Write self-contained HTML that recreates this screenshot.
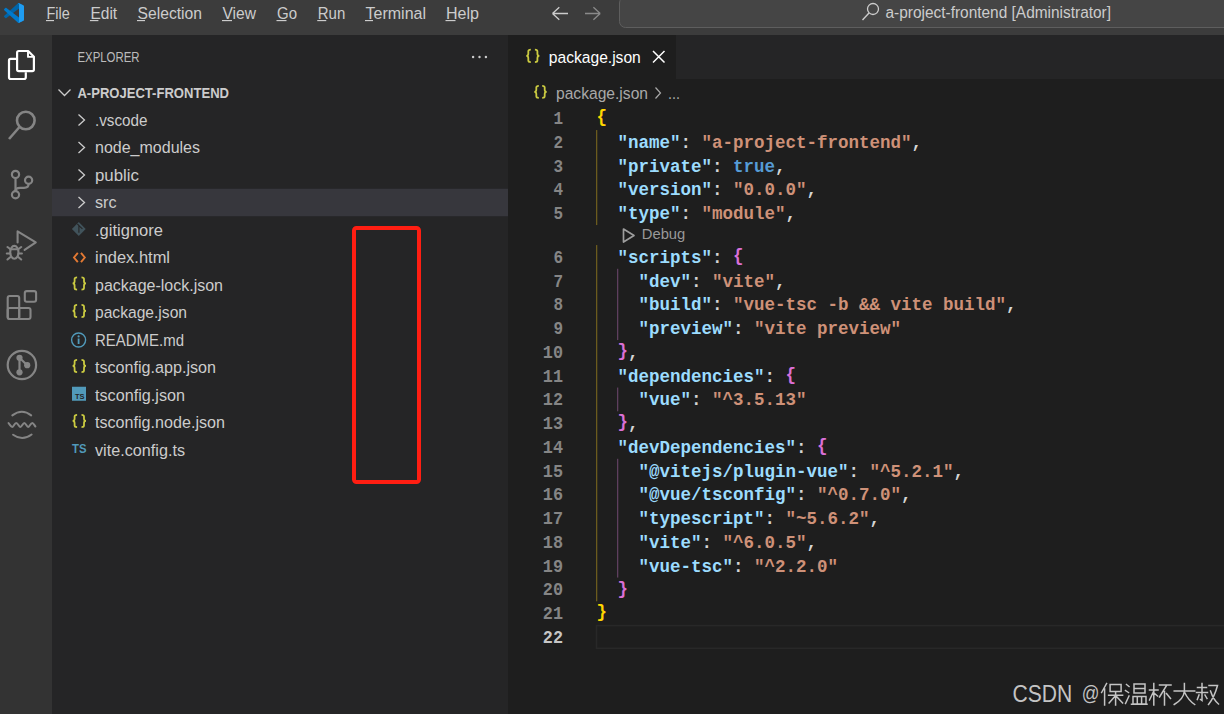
<!DOCTYPE html><html><head><meta charset="utf-8"><style>*{margin:0;padding:0}html,body{width:1224px;height:714px;overflow:hidden;background:#1e1e1e}svg{display:block}text{white-space:pre}</style></head><body>
<svg width="1224" height="714" viewBox="0 0 1224 714">
<rect x="0" y="0" width="1224" height="714" fill="#1e1e1e"/>
<rect x="0" y="0" width="1224" height="35" fill="#3c3c3c"/>
<rect x="0" y="35" width="52" height="679" fill="#333333"/>
<rect x="52" y="35" width="456" height="679" fill="#252526"/>
<rect x="508" y="35" width="716" height="44" fill="#252526"/>
<rect x="508" y="35" width="168" height="44" fill="#1e1e1e"/>
<g transform="translate(4,3) scale(0.2)"><path d="M96.4614 10.7962L75.8569 0.875542C73.4719 -0.272773 70.6217 0.211611 68.75 2.08333L1.29858 63.5832C-0.515693 65.2373 -0.513607 68.0937 1.30308 69.7452L6.81272 74.754C8.29793 76.1042 10.5347 76.2036 12.1338 74.9905L93.3609 13.3699C96.0859 11.3026 100 13.2462 100 16.6667V16.4275C100 14.0265 98.6246 11.8378 96.4614 10.7962Z" fill="#0065A9"/><path d="M96.4614 89.2038L75.8569 99.1245C73.4719 100.273 70.6217 99.7884 68.75 97.9167L1.29858 36.4169C-0.515693 34.7627 -0.513607 31.9063 1.30308 30.2548L6.81272 25.246C8.29793 23.8958 10.5347 23.7964 12.1338 25.0095L93.3609 86.6301C96.0859 88.6974 100 86.7538 100 83.3334V83.5726C100 85.9735 98.6246 88.1622 96.4614 89.2038Z" fill="#007ACC"/><path d="M75.8578 99.1263C73.4721 100.274 70.6219 99.7885 68.75 97.9166C71.0564 100.223 75 98.5895 75 95.3278V4.67213C75 1.41039 71.0564 -0.223106 68.75 2.08329C70.6219 0.211402 73.4721 -0.273666 75.8578 0.873633L96.4587 10.7807C98.6234 11.8217 100 14.0112 100 16.4132V83.5871C100 85.9893 98.6234 88.1788 96.4586 89.2198L75.8578 99.1263Z" fill="#1F9CF0"/></g>
<text x="46.5" y="19" font-family="Liberation Sans" font-size="16.25" fill="#cccccc" font-weight="normal" textLength="23.3" lengthAdjust="spacingAndGlyphs" >File</text>
<text x="90.4" y="19" font-family="Liberation Sans" font-size="16.25" fill="#cccccc" font-weight="normal" textLength="26.8" lengthAdjust="spacingAndGlyphs" >Edit</text>
<text x="137.5" y="19" font-family="Liberation Sans" font-size="16.25" fill="#cccccc" font-weight="normal" textLength="64.5" lengthAdjust="spacingAndGlyphs" >Selection</text>
<text x="222.5" y="19" font-family="Liberation Sans" font-size="16.25" fill="#cccccc" font-weight="normal" textLength="33.5" lengthAdjust="spacingAndGlyphs" >View</text>
<text x="277" y="19" font-family="Liberation Sans" font-size="16.25" fill="#cccccc" font-weight="normal" textLength="20" lengthAdjust="spacingAndGlyphs" >Go</text>
<text x="317.75" y="19" font-family="Liberation Sans" font-size="16.25" fill="#cccccc" font-weight="normal" textLength="27.5" lengthAdjust="spacingAndGlyphs" >Run</text>
<text x="365.5" y="19" font-family="Liberation Sans" font-size="16.25" fill="#cccccc" font-weight="normal" textLength="60.5" lengthAdjust="spacingAndGlyphs" >Terminal</text>
<text x="446" y="19" font-family="Liberation Sans" font-size="16.25" fill="#cccccc" font-weight="normal" textLength="33" lengthAdjust="spacingAndGlyphs" >Help</text>
<rect x="46.0" y="20" width="8" height="1.15" fill="#cccccc"/>
<rect x="89.9" y="20" width="8.5" height="1.15" fill="#cccccc"/>
<rect x="137.0" y="20" width="8" height="1.15" fill="#cccccc"/>
<rect x="222.0" y="20" width="10" height="1.15" fill="#cccccc"/>
<rect x="276.5" y="20" width="10" height="1.15" fill="#cccccc"/>
<rect x="317.25" y="20" width="9" height="1.15" fill="#cccccc"/>
<rect x="365.0" y="20" width="8" height="1.15" fill="#cccccc"/>
<rect x="445.5" y="20" width="10" height="1.15" fill="#cccccc"/>
<path d="M552.5 13.5 H568 M552.5 13.5 L559.3 7.2 M552.5 13.5 L559.3 19.8" stroke="#cccccc" stroke-width="1.3" fill="none"/>
<path d="M600.2 13.5 H585 M600.2 13.5 L593.4 7.2 M600.2 13.5 L593.4 19.8" stroke="#8a8a8a" stroke-width="1.3" fill="none"/>
<rect x="619.5" y="-3" width="640" height="30.5" rx="6" fill="#454545" stroke="#5e5e5e" stroke-width="1"/>
<circle cx="873" cy="9" r="5.5" stroke="#cccccc" stroke-width="1.3" fill="none"/><path d="M869 13 L862.5 20" stroke="#cccccc" stroke-width="1.4"/>
<text x="885.5" y="18.4" font-family="Liberation Sans" font-size="16" fill="#cccccc" font-weight="normal" textLength="225.5" lengthAdjust="spacingAndGlyphs" >a-project-frontend [Administrator]</text>
<g stroke="#ffffff" stroke-width="2.2" fill="none" stroke-linejoin="round"><path d="M16.4 58.8 H10.7 Q9 58.8 9 60.5 V77.3 Q9 79 10.7 79 H24.1 Q25.8 79 25.8 77.3 V72.3"/><path d="M18.8 51 H28.2 L33.9 56.7 V69.5 Q33.9 71.2 32.2 71.2 H18.8 Q17.1 71.2 17.1 69.5 V52.7 Q17.1 51 18.8 51 Z"/><path d="M28 51.5 V56.9 H33.4" stroke-width="1.9"/></g>
<g stroke="#858585" stroke-width="2.6" fill="none"><circle cx="25.8" cy="120.5" r="8.8"/><path d="M19.5 127 L9 139"/></g>
<g stroke="#858585" stroke-width="2.2" fill="none"><circle cx="15.5" cy="174.4" r="3.6"/><circle cx="15.5" cy="194.8" r="3.6"/><circle cx="28.6" cy="180.3" r="3.6"/><path d="M15.5 178 V191.2"/><path d="M28.6 184 Q28.6 187.8 24 187.8 H20 Q15.5 187.8 15.5 191"/></g>
<g stroke="#858585" stroke-width="2.1" fill="none" stroke-linejoin="round" stroke-linecap="round"><path d="M17.6 242.5 V231.3 L35.8 242.3 L24.6 249.8"/><ellipse cx="14.35" cy="252.3" rx="4.1" ry="6.4"/><path d="M10.5 249.2 H18.2"/><path d="M7.5 247 L10.2 249 M6.8 253.5 H10.2 M7.5 259.5 L10.2 257.2 M21.2 247 L18.5 249 M21.9 253.5 H18.5 M21.2 259.5 L18.5 257.2"/></g>
<g stroke="#858585" stroke-width="2.1" fill="none"><rect x="7.7" y="296" width="11.5" height="23" rx="2"/><rect x="7.7" y="308" width="22.8" height="11" rx="2"/><path d="M19.2 308 V319"/><rect x="24.8" y="291.1" width="11.3" height="10.6" rx="2"/></g>
<g stroke="#858585" stroke-width="2.2" fill="none"><circle cx="21.9" cy="365" r="14.2"/><path d="M19.5 357.8 V372.3 M19.5 357.8 L27.2 365.2"/></g>
<g fill="#858585"><circle cx="19.5" cy="357.8" r="3.1"/><circle cx="19.5" cy="372.3" r="3.1"/><circle cx="27.2" cy="365.2" r="3.1"/></g>
<g stroke="#858585" stroke-width="2" fill="none" stroke-linecap="round"><path d="M12.3 415.4 Q22 408 31.2 415.4"/><path d="M13.1 434.7 Q22.3 441.5 31.6 434.5"/><path d="M8.5 423 C10 425 11 427 12.2 427 C13.5 427 14.5 423 16.2 423 C18 423 19 427 20.4 427 C21.8 427 22.8 423 24.3 423 C25.8 423 26.8 427 28.1 427 C29.5 427 30.5 423 32.4 423 C33.5 423 34.5 425.5 35.4 426.5"/></g>
<text x="77.4" y="62" font-family="Liberation Sans" font-size="13.75" fill="#bbbbbb" font-weight="normal" textLength="62.2" lengthAdjust="spacingAndGlyphs" >EXPLORER</text>
<circle cx="473.1" cy="57" r="1.2" fill="#cccccc"/>
<circle cx="479.5" cy="57" r="1.2" fill="#cccccc"/>
<circle cx="485.9" cy="57" r="1.2" fill="#cccccc"/>
<path d="M58.5 89.5 L64.5 95.5 L70.5 89.5" stroke="#cccccc" stroke-width="1.3" fill="none"/>
<text x="77.4" y="98" font-family="Liberation Sans" font-size="13.75" fill="#cccccc" font-weight="bold" textLength="151.6" lengthAdjust="spacingAndGlyphs" >A-PROJECT-FRONTEND</text>
<rect x="52" y="188.75" width="456" height="27.5" fill="#37373d"/>
<path d="M78.5 114.5 L84.5 120.0 L78.5 125.5" stroke="#cccccc" stroke-width="1.3" fill="none"/>
<text x="95" y="125.85" font-family="Liberation Sans" font-size="16.25" fill="#cccccc" font-weight="normal" textLength="52.5" lengthAdjust="spacingAndGlyphs" >.vscode</text>
<path d="M78.5 142.0 L84.5 147.5 L78.5 153.0" stroke="#cccccc" stroke-width="1.3" fill="none"/>
<text x="95" y="153.35" font-family="Liberation Sans" font-size="16.25" fill="#cccccc" font-weight="normal" textLength="105" lengthAdjust="spacingAndGlyphs" >node_modules</text>
<path d="M78.5 169.5 L84.5 175.0 L78.5 180.5" stroke="#cccccc" stroke-width="1.3" fill="none"/>
<text x="95" y="180.85" font-family="Liberation Sans" font-size="16.25" fill="#cccccc" font-weight="normal" textLength="44" lengthAdjust="spacingAndGlyphs" >public</text>
<path d="M78.5 197.0 L84.5 202.5 L78.5 208.0" stroke="#cccccc" stroke-width="1.3" fill="none"/>
<text x="95" y="208.35" font-family="Liberation Sans" font-size="16.25" fill="#cccccc" font-weight="normal" textLength="21.5" lengthAdjust="spacingAndGlyphs" >src</text>
<path d="M78.8 222.0 L85.7 229.0 L78.8 236.0 L71.9 229.0 Z" fill="#41535b"/>
<path d="M77.4 223.8 L78.9 225.6 V232.8 M78.9 225.6 L82.4 228.8" stroke="#252526" stroke-width="1.1" fill="none"/>
<text x="95" y="235.85" font-family="Liberation Sans" font-size="16.25" fill="#cccccc" font-weight="normal" textLength="68" lengthAdjust="spacingAndGlyphs" >.gitignore</text>
<path d="M77.8 252.9 L74 257.5 L77.8 262.1 M81 252.9 L84.8 257.5 L81 262.1" stroke="#e37933" stroke-width="1.9" fill="none"/>
<text x="95" y="263.35" font-family="Liberation Sans" font-size="16.25" fill="#cccccc" font-weight="normal" textLength="75" lengthAdjust="spacingAndGlyphs" >index.html</text>
<path d="M77.1 277.34999999999997 Q74.6 277.34999999999997 74.6 278.95 V281.25 Q74.6 283.45 72.6 283.45 Q74.6 283.45 74.6 285.65 V287.95 Q74.6 289.55 77.1 289.55 M81.5 277.34999999999997 Q84.0 277.34999999999997 84.0 278.95 V281.25 Q84.0 283.45 86.0 283.45 Q84.0 283.45 84.0 285.65 V287.95 Q84.0 289.55 81.5 289.55" stroke="#cbcb41" stroke-width="1.8" fill="none"/>
<text x="95" y="290.85" font-family="Liberation Sans" font-size="16.25" fill="#cccccc" font-weight="normal" textLength="128" lengthAdjust="spacingAndGlyphs" >package-lock.json</text>
<path d="M77.1 304.84999999999997 Q74.6 304.84999999999997 74.6 306.45 V308.75 Q74.6 310.95 72.6 310.95 Q74.6 310.95 74.6 313.15 V315.45 Q74.6 317.05 77.1 317.05 M81.5 304.84999999999997 Q84.0 304.84999999999997 84.0 306.45 V308.75 Q84.0 310.95 86.0 310.95 Q84.0 310.95 84.0 313.15 V315.45 Q84.0 317.05 81.5 317.05" stroke="#cbcb41" stroke-width="1.8" fill="none"/>
<text x="95" y="318.35" font-family="Liberation Sans" font-size="16.25" fill="#cccccc" font-weight="normal" textLength="92" lengthAdjust="spacingAndGlyphs" >package.json</text>
<circle cx="78.6" cy="340.0" r="7" stroke="#519aba" stroke-width="1.4" fill="none"/><circle cx="78.6" cy="336.4" r="1.1" fill="#519aba"/><path d="M78.6 338.5 V344.0" stroke="#519aba" stroke-width="1.8"/>
<text x="95" y="345.85" font-family="Liberation Sans" font-size="16.25" fill="#cccccc" font-weight="normal" textLength="89" lengthAdjust="spacingAndGlyphs" >README.md</text>
<path d="M77.1 359.84999999999997 Q74.6 359.84999999999997 74.6 361.45 V363.75 Q74.6 365.95 72.6 365.95 Q74.6 365.95 74.6 368.15 V370.45 Q74.6 372.05 77.1 372.05 M81.5 359.84999999999997 Q84.0 359.84999999999997 84.0 361.45 V363.75 Q84.0 365.95 86.0 365.95 Q84.0 365.95 84.0 368.15 V370.45 Q84.0 372.05 81.5 372.05" stroke="#cbcb41" stroke-width="1.8" fill="none"/>
<text x="95" y="373.35" font-family="Liberation Sans" font-size="16.25" fill="#cccccc" font-weight="normal" textLength="121" lengthAdjust="spacingAndGlyphs" >tsconfig.app.json</text>
<rect x="72" y="386.75" width="14" height="14" fill="#519aba"/>
<text x="75" y="398.95" font-family="Liberation Sans" font-size="8" fill="#252526" font-weight="bold" textLength="9.5" lengthAdjust="spacingAndGlyphs" >TS</text>
<text x="95" y="400.85" font-family="Liberation Sans" font-size="16.25" fill="#cccccc" font-weight="normal" textLength="90" lengthAdjust="spacingAndGlyphs" >tsconfig.json</text>
<path d="M77.1 414.84999999999997 Q74.6 414.84999999999997 74.6 416.45 V418.75 Q74.6 420.95 72.6 420.95 Q74.6 420.95 74.6 423.15 V425.45 Q74.6 427.05 77.1 427.05 M81.5 414.84999999999997 Q84.0 414.84999999999997 84.0 416.45 V418.75 Q84.0 420.95 86.0 420.95 Q84.0 420.95 84.0 423.15 V425.45 Q84.0 427.05 81.5 427.05" stroke="#cbcb41" stroke-width="1.8" fill="none"/>
<text x="95" y="428.35" font-family="Liberation Sans" font-size="16.25" fill="#cccccc" font-weight="normal" textLength="130" lengthAdjust="spacingAndGlyphs" >tsconfig.node.json</text>
<text x="72" y="453.45" font-family="Liberation Sans" font-size="12" fill="#519aba" font-weight="bold" textLength="14.5" lengthAdjust="spacingAndGlyphs" >TS</text>
<text x="95" y="455.85" font-family="Liberation Sans" font-size="16.25" fill="#cccccc" font-weight="normal" textLength="90" lengthAdjust="spacingAndGlyphs" >vite.config.ts</text>
<rect x="354" y="228" width="65" height="254" rx="2.5" stroke="#ff1e12" stroke-width="4" fill="none"/>
<path d="M530.8 49.699999999999996 Q528.3 49.699999999999996 528.3 51.3 V53.74999999999999 Q528.3 55.949999999999996 526.3 55.949999999999996 Q528.3 55.949999999999996 528.3 58.15 V60.599999999999994 Q528.3 62.199999999999996 530.8 62.199999999999996 M534.9000000000001 49.699999999999996 Q537.4000000000001 49.699999999999996 537.4000000000001 51.3 V53.74999999999999 Q537.4000000000001 55.949999999999996 539.4000000000001 55.949999999999996 Q537.4000000000001 55.949999999999996 537.4000000000001 58.15 V60.599999999999994 Q537.4000000000001 62.199999999999996 534.9000000000001 62.199999999999996" stroke="#cbcb41" stroke-width="1.8" fill="none"/>
<text x="548.8" y="63" font-family="Liberation Sans" font-size="16.25" fill="#ffffff" font-weight="normal" textLength="92" lengthAdjust="spacingAndGlyphs" >package.json</text>
<path d="M653 51 L664.5 62.5 M664.5 51 L653 62.5" stroke="#ffffff" stroke-width="1.5"/>
<path d="M538.8 85.80000000000001 Q536.3 85.80000000000001 536.3 87.4 V89.65 Q536.3 91.85000000000001 534.3 91.85000000000001 Q536.3 91.85000000000001 536.3 94.05000000000001 V96.30000000000001 Q536.3 97.9 538.8 97.9 M542.2 85.80000000000001 Q544.7 85.80000000000001 544.7 87.4 V89.65 Q544.7 91.85000000000001 546.7 91.85000000000001 Q544.7 91.85000000000001 544.7 94.05000000000001 V96.30000000000001 Q544.7 97.9 542.2 97.9" stroke="#cbcb41" stroke-width="1.8" fill="none"/>
<text x="556" y="99" font-family="Liberation Sans" font-size="16.25" fill="#a9a9a9" font-weight="normal" textLength="92" lengthAdjust="spacingAndGlyphs" >package.json</text>
<path d="M655.5 87.5 L660.5 93 L655.5 98.5" stroke="#a9a9a9" stroke-width="1.2" fill="none"/>
<text x="668" y="99" font-family="Liberation Sans" font-size="16.25" fill="#a9a9a9" font-weight="normal" textLength="12" lengthAdjust="spacingAndGlyphs" >...</text>
<rect x="596.5" y="625.55" width="640" height="22.75" fill="none" stroke="#282828" stroke-width="1.5"/>
<rect x="596" y="130.05" width="1.3" height="95.0" fill="#6b5b1e"/>
<rect x="596" y="245.05" width="1.3" height="356.24999999999994" fill="#6b5b1e"/>
<rect x="617" y="268.8" width="1.3" height="71.25" fill="#5e3f5e"/>
<rect x="617" y="387.55" width="1.3" height="23.75" fill="#5e3f5e"/>
<rect x="617" y="458.8" width="1.3" height="118.74999999999994" fill="#5e3f5e"/>
<path d="M623.5 229 L634 235.5 L623.5 242 Z" stroke="#9d9d9d" stroke-width="1.7" fill="none" stroke-linejoin="round"/>
<text x="641.8" y="238.7" font-family="Liberation Sans" font-size="14.75" fill="#999999" font-weight="normal" textLength="43.5" lengthAdjust="spacingAndGlyphs" >Debug</text>
<text x="553.4" y="124.0" font-family="Liberation Mono" font-weight="bold" font-size="18.5" fill="#858585" textLength="9.6" lengthAdjust="spacingAndGlyphs">1</text>
<text x="596.5" y="124.0" font-family="Liberation Mono" font-weight="bold" font-size="17.5" textLength="10.5" lengthAdjust="spacingAndGlyphs" xml:space="preserve"><tspan fill="#ffd700" dy="-1.6">{</tspan></text>
<text x="553.4" y="147.75" font-family="Liberation Mono" font-weight="bold" font-size="18.5" fill="#858585" textLength="9.6" lengthAdjust="spacingAndGlyphs">2</text>
<text x="596.5" y="147.75" font-family="Liberation Mono" font-weight="bold" font-size="17.5" textLength="325.5" lengthAdjust="spacingAndGlyphs" xml:space="preserve"><tspan fill="#d4d4d4">  </tspan><tspan fill="#9cdcfe">"name"</tspan><tspan fill="#d4d4d4">: </tspan><tspan fill="#ce9178">"a-project-frontend"</tspan><tspan fill="#d4d4d4">,</tspan></text>
<text x="553.4" y="171.5" font-family="Liberation Mono" font-weight="bold" font-size="18.5" fill="#858585" textLength="9.6" lengthAdjust="spacingAndGlyphs">3</text>
<text x="596.5" y="171.5" font-family="Liberation Mono" font-weight="bold" font-size="17.5" textLength="189.0" lengthAdjust="spacingAndGlyphs" xml:space="preserve"><tspan fill="#d4d4d4">  </tspan><tspan fill="#9cdcfe">"private"</tspan><tspan fill="#d4d4d4">: </tspan><tspan fill="#569cd6">true</tspan><tspan fill="#d4d4d4">,</tspan></text>
<text x="553.4" y="195.25" font-family="Liberation Mono" font-weight="bold" font-size="18.5" fill="#858585" textLength="9.6" lengthAdjust="spacingAndGlyphs">4</text>
<text x="596.5" y="195.25" font-family="Liberation Mono" font-weight="bold" font-size="17.5" textLength="220.5" lengthAdjust="spacingAndGlyphs" xml:space="preserve"><tspan fill="#d4d4d4">  </tspan><tspan fill="#9cdcfe">"version"</tspan><tspan fill="#d4d4d4">: </tspan><tspan fill="#ce9178">"0.0.0"</tspan><tspan fill="#d4d4d4">,</tspan></text>
<text x="553.4" y="219.0" font-family="Liberation Mono" font-weight="bold" font-size="18.5" fill="#858585" textLength="9.6" lengthAdjust="spacingAndGlyphs">5</text>
<text x="596.5" y="219.0" font-family="Liberation Mono" font-weight="bold" font-size="17.5" textLength="199.5" lengthAdjust="spacingAndGlyphs" xml:space="preserve"><tspan fill="#d4d4d4">  </tspan><tspan fill="#9cdcfe">"type"</tspan><tspan fill="#d4d4d4">: </tspan><tspan fill="#ce9178">"module"</tspan><tspan fill="#d4d4d4">,</tspan></text>
<text x="553.4" y="262.75" font-family="Liberation Mono" font-weight="bold" font-size="18.5" fill="#858585" textLength="9.6" lengthAdjust="spacingAndGlyphs">6</text>
<text x="596.5" y="262.75" font-family="Liberation Mono" font-weight="bold" font-size="17.5" textLength="147.0" lengthAdjust="spacingAndGlyphs" xml:space="preserve"><tspan fill="#d4d4d4">  </tspan><tspan fill="#9cdcfe">"scripts"</tspan><tspan fill="#d4d4d4">: </tspan><tspan fill="#da70d6" dy="-1.6">{</tspan></text>
<text x="553.4" y="286.5" font-family="Liberation Mono" font-weight="bold" font-size="18.5" fill="#858585" textLength="9.6" lengthAdjust="spacingAndGlyphs">7</text>
<text x="596.5" y="286.5" font-family="Liberation Mono" font-weight="bold" font-size="17.5" textLength="189.0" lengthAdjust="spacingAndGlyphs" xml:space="preserve"><tspan fill="#d4d4d4">    </tspan><tspan fill="#9cdcfe">"dev"</tspan><tspan fill="#d4d4d4">: </tspan><tspan fill="#ce9178">"vite"</tspan><tspan fill="#d4d4d4">,</tspan></text>
<text x="553.4" y="310.25" font-family="Liberation Mono" font-weight="bold" font-size="18.5" fill="#858585" textLength="9.6" lengthAdjust="spacingAndGlyphs">8</text>
<text x="596.5" y="310.25" font-family="Liberation Mono" font-weight="bold" font-size="17.5" textLength="420.0" lengthAdjust="spacingAndGlyphs" xml:space="preserve"><tspan fill="#d4d4d4">    </tspan><tspan fill="#9cdcfe">"build"</tspan><tspan fill="#d4d4d4">: </tspan><tspan fill="#ce9178">"vue-tsc -b &amp;&amp; vite build"</tspan><tspan fill="#d4d4d4">,</tspan></text>
<text x="553.4" y="334.0" font-family="Liberation Mono" font-weight="bold" font-size="18.5" fill="#858585" textLength="9.6" lengthAdjust="spacingAndGlyphs">9</text>
<text x="596.5" y="334.0" font-family="Liberation Mono" font-weight="bold" font-size="17.5" textLength="304.5" lengthAdjust="spacingAndGlyphs" xml:space="preserve"><tspan fill="#d4d4d4">    </tspan><tspan fill="#9cdcfe">"preview"</tspan><tspan fill="#d4d4d4">: </tspan><tspan fill="#ce9178">"vite preview"</tspan></text>
<text x="542.8" y="357.75" font-family="Liberation Mono" font-weight="bold" font-size="18.5" fill="#858585" textLength="20.2" lengthAdjust="spacingAndGlyphs">10</text>
<text x="596.5" y="357.75" font-family="Liberation Mono" font-weight="bold" font-size="17.5" textLength="42.0" lengthAdjust="spacingAndGlyphs" xml:space="preserve"><tspan fill="#d4d4d4">  </tspan><tspan fill="#da70d6" dy="-1.6">}</tspan><tspan fill="#d4d4d4" dy="1.6">,</tspan></text>
<text x="542.8" y="381.5" font-family="Liberation Mono" font-weight="bold" font-size="18.5" fill="#858585" textLength="20.2" lengthAdjust="spacingAndGlyphs">11</text>
<text x="596.5" y="381.5" font-family="Liberation Mono" font-weight="bold" font-size="17.5" textLength="199.5" lengthAdjust="spacingAndGlyphs" xml:space="preserve"><tspan fill="#d4d4d4">  </tspan><tspan fill="#9cdcfe">"dependencies"</tspan><tspan fill="#d4d4d4">: </tspan><tspan fill="#da70d6" dy="-1.6">{</tspan></text>
<text x="542.8" y="405.25" font-family="Liberation Mono" font-weight="bold" font-size="18.5" fill="#858585" textLength="20.2" lengthAdjust="spacingAndGlyphs">12</text>
<text x="596.5" y="405.25" font-family="Liberation Mono" font-weight="bold" font-size="17.5" textLength="210.0" lengthAdjust="spacingAndGlyphs" xml:space="preserve"><tspan fill="#d4d4d4">    </tspan><tspan fill="#9cdcfe">"vue"</tspan><tspan fill="#d4d4d4">: </tspan><tspan fill="#ce9178">"^3.5.13"</tspan></text>
<text x="542.8" y="429.0" font-family="Liberation Mono" font-weight="bold" font-size="18.5" fill="#858585" textLength="20.2" lengthAdjust="spacingAndGlyphs">13</text>
<text x="596.5" y="429.0" font-family="Liberation Mono" font-weight="bold" font-size="17.5" textLength="42.0" lengthAdjust="spacingAndGlyphs" xml:space="preserve"><tspan fill="#d4d4d4">  </tspan><tspan fill="#da70d6" dy="-1.6">}</tspan><tspan fill="#d4d4d4" dy="1.6">,</tspan></text>
<text x="542.8" y="452.75" font-family="Liberation Mono" font-weight="bold" font-size="18.5" fill="#858585" textLength="20.2" lengthAdjust="spacingAndGlyphs">14</text>
<text x="596.5" y="452.75" font-family="Liberation Mono" font-weight="bold" font-size="17.5" textLength="231.0" lengthAdjust="spacingAndGlyphs" xml:space="preserve"><tspan fill="#d4d4d4">  </tspan><tspan fill="#9cdcfe">"devDependencies"</tspan><tspan fill="#d4d4d4">: </tspan><tspan fill="#da70d6" dy="-1.6">{</tspan></text>
<text x="542.8" y="476.5" font-family="Liberation Mono" font-weight="bold" font-size="18.5" fill="#858585" textLength="20.2" lengthAdjust="spacingAndGlyphs">15</text>
<text x="596.5" y="476.5" font-family="Liberation Mono" font-weight="bold" font-size="17.5" textLength="367.5" lengthAdjust="spacingAndGlyphs" xml:space="preserve"><tspan fill="#d4d4d4">    </tspan><tspan fill="#9cdcfe">"@vitejs/plugin-vue"</tspan><tspan fill="#d4d4d4">: </tspan><tspan fill="#ce9178">"^5.2.1"</tspan><tspan fill="#d4d4d4">,</tspan></text>
<text x="542.8" y="500.25" font-family="Liberation Mono" font-weight="bold" font-size="18.5" fill="#858585" textLength="20.2" lengthAdjust="spacingAndGlyphs">16</text>
<text x="596.5" y="500.25" font-family="Liberation Mono" font-weight="bold" font-size="17.5" textLength="315.0" lengthAdjust="spacingAndGlyphs" xml:space="preserve"><tspan fill="#d4d4d4">    </tspan><tspan fill="#9cdcfe">"@vue/tsconfig"</tspan><tspan fill="#d4d4d4">: </tspan><tspan fill="#ce9178">"^0.7.0"</tspan><tspan fill="#d4d4d4">,</tspan></text>
<text x="542.8" y="524.0" font-family="Liberation Mono" font-weight="bold" font-size="18.5" fill="#858585" textLength="20.2" lengthAdjust="spacingAndGlyphs">17</text>
<text x="596.5" y="524.0" font-family="Liberation Mono" font-weight="bold" font-size="17.5" textLength="283.5" lengthAdjust="spacingAndGlyphs" xml:space="preserve"><tspan fill="#d4d4d4">    </tspan><tspan fill="#9cdcfe">"typescript"</tspan><tspan fill="#d4d4d4">: </tspan><tspan fill="#ce9178">"~5.6.2"</tspan><tspan fill="#d4d4d4">,</tspan></text>
<text x="542.8" y="547.75" font-family="Liberation Mono" font-weight="bold" font-size="18.5" fill="#858585" textLength="20.2" lengthAdjust="spacingAndGlyphs">18</text>
<text x="596.5" y="547.75" font-family="Liberation Mono" font-weight="bold" font-size="17.5" textLength="220.5" lengthAdjust="spacingAndGlyphs" xml:space="preserve"><tspan fill="#d4d4d4">    </tspan><tspan fill="#9cdcfe">"vite"</tspan><tspan fill="#d4d4d4">: </tspan><tspan fill="#ce9178">"^6.0.5"</tspan><tspan fill="#d4d4d4">,</tspan></text>
<text x="542.8" y="571.5" font-family="Liberation Mono" font-weight="bold" font-size="18.5" fill="#858585" textLength="20.2" lengthAdjust="spacingAndGlyphs">19</text>
<text x="596.5" y="571.5" font-family="Liberation Mono" font-weight="bold" font-size="17.5" textLength="241.5" lengthAdjust="spacingAndGlyphs" xml:space="preserve"><tspan fill="#d4d4d4">    </tspan><tspan fill="#9cdcfe">"vue-tsc"</tspan><tspan fill="#d4d4d4">: </tspan><tspan fill="#ce9178">"^2.2.0"</tspan></text>
<text x="542.8" y="595.25" font-family="Liberation Mono" font-weight="bold" font-size="18.5" fill="#858585" textLength="20.2" lengthAdjust="spacingAndGlyphs">20</text>
<text x="596.5" y="595.25" font-family="Liberation Mono" font-weight="bold" font-size="17.5" textLength="31.5" lengthAdjust="spacingAndGlyphs" xml:space="preserve"><tspan fill="#d4d4d4">  </tspan><tspan fill="#da70d6" dy="-1.6">}</tspan></text>
<text x="542.8" y="619.0" font-family="Liberation Mono" font-weight="bold" font-size="18.5" fill="#858585" textLength="20.2" lengthAdjust="spacingAndGlyphs">21</text>
<text x="596.5" y="619.0" font-family="Liberation Mono" font-weight="bold" font-size="17.5" textLength="10.5" lengthAdjust="spacingAndGlyphs" xml:space="preserve"><tspan fill="#ffd700" dy="-1.6">}</tspan></text>
<text x="542.8" y="642.75" font-family="Liberation Mono" font-weight="bold" font-size="18.5" fill="#c6c6c6" textLength="20.2" lengthAdjust="spacingAndGlyphs">22</text>
<text x="1012.5" y="701.8" font-family="Liberation Sans" font-size="24" fill="#c4c4c4" font-weight="normal" textLength="59.8" lengthAdjust="spacingAndGlyphs" >CSDN</text>
<text x="1081.7" y="699.5" font-family="Liberation Sans" font-size="20.5" fill="#c4c4c4" font-weight="normal" textLength="17.7" lengthAdjust="spacingAndGlyphs" >@</text>
<g transform="translate(1100.6,683)"><path d="M6 0.5 L1 9.5 M4 6 V22 M9.5 1.5 H20.5 V8.5 H9.5 Z M8 12.2 H22 M15 8.5 V22 M15 12.5 L8.5 20 M15 12.5 L22 20" stroke="#c4c4c4" stroke-width="1.5" fill="none" stroke-linecap="square"/></g>
<g transform="translate(1125,683)"><path d="M1.5 1.5 L4 3.5 M0.5 7.5 L3.5 9.5 M0.5 20.5 L4 13 M9 1 H20 V10 H9 Z M9 5.5 H20 M8 13.5 H21 V21 H8 Z M12.3 13.5 V21 M16.6 13.5 V21 M6.5 21.3 H22" stroke="#c4c4c4" stroke-width="1.5" fill="none" stroke-linecap="square"/></g>
<g transform="translate(1149,683)"><path d="M0.5 7 H9 M4.8 0.5 V22 M4.8 8 L0.5 17 M5 10 L8.5 13 M10.5 2 H22 M17.5 2.5 L10.5 14 M15.5 8.5 V22 M17.5 10.5 L21.5 15.5" stroke="#c4c4c4" stroke-width="1.5" fill="none" stroke-linecap="square"/></g>
<g transform="translate(1173.2,683)"><path d="M1 8 H21.5 M11.2 0.5 V8 Q10.5 16 1 21.5 M11.5 9.5 Q15 17 21.5 21.5" stroke="#c4c4c4" stroke-width="1.5" fill="none" stroke-linecap="square"/></g>
<g transform="translate(1196.5,683)"><path d="M1 4.5 H10 M5.5 0.5 V17.5 L4 16.5 M0 9.5 H11 M2.5 12 L0.8 16.5 M8.5 12 L10.5 15.5 M12.5 2.5 H21 Q18 14 12 21.5 M14 8 Q17 17 22 21" stroke="#c4c4c4" stroke-width="1.5" fill="none" stroke-linecap="square"/></g>
</svg></body></html>
